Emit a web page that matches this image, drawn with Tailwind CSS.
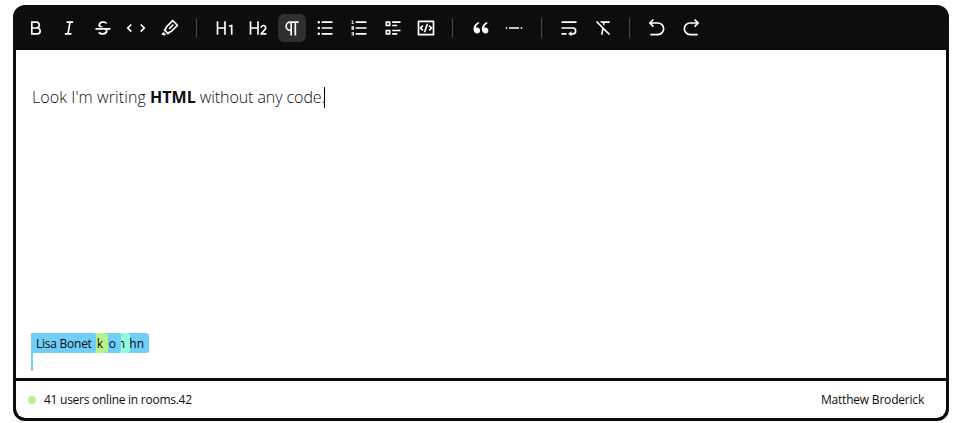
<!DOCTYPE html>
<html lang="en">
<head>
<meta charset="utf-8">
<title>Editor</title>
<script src="https://cdn.jsdelivr.net/npm/@tailwindcss/browser@4"></script>
</head>
<body class="bg-white overflow-hidden font-['Open_Sans','Noto_Sans',sans-serif] text-[#0d0d0d]">
<main class="ml-[13px] mt-[5px] flex h-[416px] w-[936px] flex-col overflow-hidden rounded-xl border-3 border-[#0d0d0d] bg-[#0d0d0d]">
  <header class="flex h-[42px] shrink-0 items-center bg-[#0d0d0d] pb-[2px] pl-[5.7px] text-white">
    <div class="flex gap-[5.6px]" data-icons="bold italic strike code mark"></div>
    <i class="mr-[13.52px] ml-3 h-5 w-px bg-white/25"></i>
    <div class="flex gap-[5.6px]" data-icons="h1 h2 paragraph bullets numbers tasks codebox"></div>
    <i class="mr-[13.5px] ml-[12.1px] h-5 w-px bg-white/25"></i>
    <div class="flex gap-[5.6px]" data-icons="quote rule"></div>
    <i class="mr-[13.6px] ml-[12.2px] h-5 w-px bg-white/25"></i>
    <div class="flex gap-[5.6px]" data-icons="wrap clear"></div>
    <i class="mr-[13.4px] ml-[12.1px] h-5 w-px bg-white/25"></i>
    <div class="flex gap-[5.6px]" data-icons="undo redo"></div>
  </header>
  <section class="flex grow flex-col justify-between bg-white px-4 pt-[35px]">
    <p class="flex h-6 items-center text-base font-[350] whitespace-pre"><span><span class="tracking-[0.09px]">Look I'm writing </span><b class="font-bold">HTML</b><span class="tracking-[-0.08px]"> without any code.</span></span><span class="-ml-px h-[21px] w-px bg-black"></span></p>
    <div class="relative mb-[7px] -ml-px h-[38px] w-[118px] text-xs leading-[22px] font-medium whitespace-nowrap">
      <span class="absolute top-0 left-0 h-5 w-[118px] rounded-r-[3px] bg-[#70cff8] pr-[5px] text-right">hn</span>
      <span class="absolute top-0 left-0 h-5 w-[99px] rounded-r-[3px] bg-[#94fadb] pr-[5px] text-right">n</span>
      <span class="absolute top-0 left-0 h-5 w-[90px] rounded-r-[3px] bg-[#70cff8] pr-[5px] text-right">io</span>
      <span class="absolute top-0 left-0 h-5 w-[77px] rounded-r-[3px] bg-[#b9f18d] pr-[5px] text-right">k</span>
      <span class="absolute top-0 left-0 h-5 w-[65px] rounded-r-[3px] bg-[#70cff8] pl-[5px] tracking-[-0.25px]">Lisa Bonet</span>
      <span class="absolute top-0 left-0 h-[38px] w-[2px] bg-[#70cff8]"></span>
    </div>
  </section>
  <footer class="flex h-10 shrink-0 items-center justify-between rounded-b-[9px] border-t-3 border-[#0d0d0d] bg-white pr-[22px] pl-3 text-xs font-medium tracking-[-0.26px]">
    <div class="flex items-center gap-2"><i class="size-2 rounded-full bg-[#b9f18d]"></i><span>41 users online in rooms.42</span></div>
    <span class="tracking-[-0.2px]">Matthew Broderick</span>
  </footer>
</main>
<script>
const paths = {
bold:"M8 11h4.5a2.5 2.5 0 1 0 0-5H8v5zm10 4.5a4.5 4.5 0 0 1-4.5 4.5H6V4h6.5a4.5 4.5 0 0 1 3.256 7.606A4.498 4.498 0 0 1 18 15.5zM8 13v5h5.5a2.5 2.5 0 1 0 0-5H8z",
italic:"M15 20H7v-2h2.927l2.116-12H9V4h8v2h-2.927l-2.116 12H15z",
strike:"M17.154 14c.23.516.346 1.09.346 1.72 0 1.342-.524 2.392-1.571 3.147C14.88 19.622 13.433 20 11.586 20c-1.64 0-3.263-.381-4.87-1.144V16.6c1.52.877 3.075 1.316 4.666 1.316 2.551 0 3.83-.732 3.839-2.197a2.21 2.21 0 0 0-.648-1.603l-.12-.117H3v-2h18v2h-3.846zm-4.078-3H7.629a4.086 4.086 0 0 1-.481-.522C6.716 9.92 6.5 9.246 6.5 8.452c0-1.236.466-2.287 1.397-3.153C8.83 4.433 10.271 4 12.222 4c1.471 0 2.879.328 4.222.984v2.152c-1.2-.687-2.515-1.03-3.946-1.03-2.48 0-3.719.782-3.719 2.346 0 .42.218.786.654 1.099.436.313.974.562 1.613.75.62.18 1.297.414 2.03.699z",
code:"M16.95 8.464l1.414-1.414 4.95 4.95-4.95 4.95-1.414-1.414L20.485 12 16.95 8.464zm-9.9 0L3.515 12l3.535 3.536-1.414 1.414L.686 12l4.95-4.95L7.05 8.464z",
mark:"M15.243 4.515l-6.738 6.737-.707 2.121-1.04 1.041 2.828 2.829 1.04-1.041 2.122-.707 6.737-6.738-4.242-4.242zm6.364 3.535a1 1 0 0 1 0 1.414l-7.779 7.779-2.12.707-1.415 1.414a1 1 0 0 1-1.414 0l-4.243-4.243a1 1 0 0 1 0-1.414l1.414-1.414.707-2.121 7.779-7.779a1 1 0 0 1 1.414 0l5.657 5.657zm-6.364-.707l1.414 1.414-4.95 4.95-1.414-1.414 4.95-4.95zM4.283 16.89l2.828 2.829-1.414 1.414-4.243-1.414 2.828-2.829z",
h1:"M13 20h-2v-7H4v7H2V4h2v7h7V4h2v16zm8-12v12h-2v-9.796l-2 .536V8.67L19.5 8H21z",
h2:"M4 4v7h7V4h2v16h-2v-7H4v7H2V4h2zm14.5 4c2.071 0 3.75 1.679 3.75 3.75 0 .857-.288 1.648-.772 2.28l-.148.18L18.034 18H22v2h-7v-1.556l4.82-5.546c.268-.307.43-.709.43-1.148 0-.966-.784-1.75-1.75-1.75-.918 0-1.671.707-1.744 1.606l-.006.144h-2C14.75 9.679 16.429 8 18.5 8z",
paragraph:"M12 6v15h-2v-5a6 6 0 1 1 0-12h10v2h-3v15h-2V6h-3zm-2 0a4 4 0 1 0 0 8V6z",
bullets:"M8 4h13v2H8V4zM4.5 6.5a1.5 1.5 0 1 1 0-3 1.5 1.5 0 0 1 0 3zm0 7a1.5 1.5 0 1 1 0-3 1.5 1.5 0 0 1 0 3zm0 6.9a1.5 1.5 0 1 1 0-3 1.5 1.5 0 0 1 0 3zM8 11h13v2H8v-2zm0 7h13v2H8v-2z",
numbers:"M8 4h13v2H8V4zM5 3v3h1v1H3V6h1V4H3V3h2zM3 14v-2.5h2V11H3v-1h3v2.5H4v.5h2v1H3zm2 5.5H3v-1h2V18H3v-1h3v4H3v-1h2v-.5zM8 11h13v2H8v-2zm0 7h13v2H8v-2z",
tasks:"M11 4h10v2H11V4zm0 4h6v2h-6V8zm0 6h10v2H11v-2zm0 4h6v2h-6v-2zM3 4h6v6H3V4zm2 2v2h2V6H5zm-2 8h6v6H3v-6zm2 2v2h2v-2H5z",
codebox:"M3 3h18a1 1 0 0 1 1 1v16a1 1 0 0 1-1 1H3a1 1 0 0 1-1-1V4a1 1 0 0 1 1-1zm1 2v14h16V5H4zm16 7l-3.536 3.536-1.414-1.415L17.172 12 15.05 9.879l1.414-1.415L20 12zM6.828 12l2.122 2.121-1.414 1.415L4 12l3.536-3.536L8.95 9.88 6.828 12zm4.416 5H9.116l3.64-10h2.128l-3.64 10z",
quote:"M4.583 17.321C3.553 16.227 3 15 3 13.011c0-3.5 2.457-6.637 6.03-8.188l.893 1.378c-3.335 1.804-3.987 4.145-4.247 5.621.537-.278 1.24-.375 1.929-.311 1.804.167 3.226 1.648 3.226 3.489a3.5 3.5 0 0 1-3.5 3.5c-1.073 0-2.099-.49-2.748-1.179zm10 0C13.553 16.227 13 15 13 13.011c0-3.5 2.457-6.637 6.03-8.188l.893 1.378c-3.335 1.804-3.987 4.145-4.247 5.621.537-.278 1.24-.375 1.929-.311 1.804.167 3.226 1.648 3.226 3.489a3.5 3.5 0 0 1-3.5 3.5c-1.073 0-2.099-.49-2.748-1.179z",
rule:"M2 11h2v2H2v-2zm4 0h12v2H6v-2zm14 0h2v2h-2v-2z",
wrap:"M15 18h1.5a2.5 2.5 0 1 0 0-5H3v-2h13.5a4.5 4.5 0 1 1 0 9H15v2l-4-3 4-3v2zM3 4h18v2H3V4zm6 14v2H3v-2h6z",
clear:"M12.651 14.065L11.605 20H9.574l1.35-7.661-7.41-7.41L4.93 3.515 20.485 19.07l-1.414 1.414-6.42-6.42zm-.878-6.535l.27-1.53h-1.8l-2-2H20v2h-5.927L13.5 9.257 11.773 7.53z",
undo:"M5.828 7l2.536 2.536L6.95 10.95 2 6l4.95-4.95 1.414 1.414L5.828 5H13a8 8 0 1 1 0 16H4v-2h9a6 6 0 1 0 0-12H5.828z",
redo:"M18.172 7H11a6 6 0 1 0 0 12h9v2h-9a8 8 0 1 1 0-16h7.172l-2.536-2.536L17.05 1.05 22 6l-4.95 4.95-1.414-1.414L18.172 7z"
};
document.querySelectorAll('[data-icons]').forEach(group => {
  group.innerHTML = group.dataset.icons.split(' ').map(name =>
    `<button aria-label="${name}" class="flex size-7 items-center justify-center ${name === 'paragraph' ? 'rounded-md bg-[#303030]' : ''}"><svg class="size-5" viewBox="0 0 24 24" fill="currentColor"><path d="${paths[name]}"/></svg></button>`
  ).join('');
});
</script>
</body>
</html>
